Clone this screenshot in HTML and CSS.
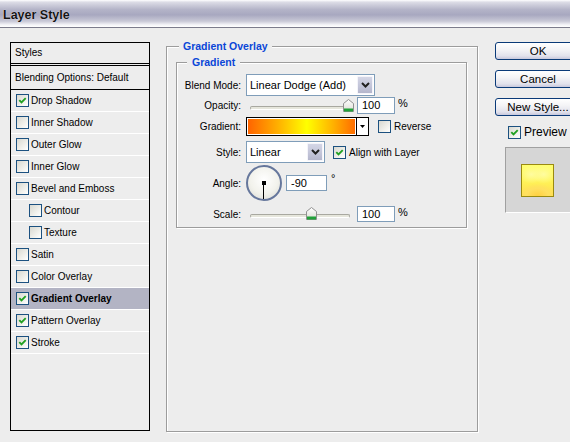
FILE: index.html
```html
<!DOCTYPE html>
<html lang="en">
<head>
    <meta charset="UTF-8">
    <title>Layer Style</title>
    <link rel="stylesheet" href="styles.css">
</head>
<body>
    <div class="titlebar"><span class="title">Layer Style</span></div>
    <div class="main">
        <div class="styles-list">
            <div class="list-head">Styles</div>
            <div class="list-item blending">Blending Options: Default</div>
            <div class="list-item"><span class="check on"></span>Drop Shadow</div>
            <div class="list-item"><span class="check"></span>Inner Shadow</div>
            <div class="list-item"><span class="check"></span>Outer Glow</div>
            <div class="list-item"><span class="check"></span>Inner Glow</div>
            <div class="list-item"><span class="check"></span>Bevel and Emboss</div>
            <div class="list-item sub"><span class="check"></span>Contour</div>
            <div class="list-item sub"><span class="check"></span>Texture</div>
            <div class="list-item"><span class="check"></span>Satin</div>
            <div class="list-item"><span class="check"></span>Color Overlay</div>
            <div class="list-item active"><span class="check on"></span>Gradient Overlay</div>
            <div class="list-item"><span class="check on"></span>Pattern Overlay</div>
            <div class="list-item"><span class="check on"></span>Stroke</div>
        </div>

        <div class="group outer">
            <span class="group-title">Gradient Overlay</span>
            <div class="group inner">
                <span class="group-title inner-title">Gradient</span>

                <div class="field f-blend">
                    <span class="label">Blend Mode:</span>
                    <div class="select blend-select">
                        <span class="select-text">Linear Dodge (Add)</span>
                        <span class="select-btn"></span>
                    </div>
                </div>

                <div class="field f-opacity">
                    <span class="label">Opacity:</span>
                    <div class="slider">
                        <span class="track"></span>
                        <span class="thumb" style="left: 97px"></span>
                    </div>
                    <span class="num">100</span>
                    <span class="unit">%</span>
                </div>

                <div class="field f-gradient">
                    <span class="label">Gradient:</span>
                    <div class="gradient-box"><span class="gradient-fill"></span></div>
                    <span class="grad-arrow"></span>
                    <span class="check opt"></span><span class="opt-text">Reverse</span>
                </div>

                <div class="field f-style">
                    <span class="label">Style:</span>
                    <div class="select style-select">
                        <span class="select-text">Linear</span>
                        <span class="select-btn"></span>
                    </div>
                    <span class="check on opt-style"></span><span class="opt-text">Align with Layer</span>
                </div>

                <div class="field f-angle">
                    <span class="label">Angle:</span>
                    <div class="dial"></div>
                    <span class="num angle-num">-90</span>
                    <span class="degree">°</span>
                </div>

                <div class="field f-scale">
                    <span class="label">Scale:</span>
                    <div class="slider">
                        <span class="track"></span>
                        <span class="thumb" style="left: 60px"></span>
                    </div>
                    <span class="num scale-num">100</span>
                    <span class="unit">%</span>
                </div>
            </div>
        </div>

        <div class="side">
            <div class="btn">OK</div>
            <div class="btn">Cancel</div>
            <div class="btn">New Style...</div>
            <div class="preview-row"><span class="check on"></span>Preview</div>
            <div class="preview-box"><div class="swatch"></div></div>
        </div>
    </div>
</body>
</html>
```

FILE: styles.css
```css
* {
    box-sizing: border-box;
}
body {
    margin: 0;
    width: 570px;
    height: 442px;
    overflow: hidden;
    background-color: #ededed;
    font-family: "Liberation Sans", Arial, sans-serif;
    font-size: 10px;
    color: #000;
}
.titlebar {
    height: 28px;
    padding: 2px 0 0 3px;
    display: flex;
    align-items: center;
    border-bottom: 1px solid #7c7c8c;
    background: linear-gradient(#ffffff 0, #dcdce6 8%, #b4b4c8 35%, #a8a8c0 55%, #c8c8d6 78%, #f4f4f8 92%, #ffffff 100%);
}
.title {
    font-size: 12.5px;
    font-weight: bold;
    color: #141414;
    text-shadow: 0 0 1px #fff;
}
.main {
    display: flex;
    align-items: flex-start;
    padding: 14px 0 0 10px;
}

/* styles list */
.styles-list {
    width: 140px;
    height: 389px;
    border: 1px solid #000;
    flex: none;
}
.list-head {
    height: 23px;
    padding-left: 4px;
    line-height: 20px;
    border-bottom: 3px double #000;
}
.list-item {
    height: 22px;
    padding-left: 5px;
    display: flex;
    align-items: center;
    border-bottom: 1px solid #fff;
}
.list-item.blending {
    height: 24px;
    padding-left: 4px;
    border-bottom-color: #000;
}
.list-item.sub {
    padding-left: 18px;
}
.list-item.active {
    background-color: #b3b4c4;
    font-weight: bold;
}
.check {
    width: 13px;
    height: 13px;
    margin-right: 2px;
    flex: none;
    border: 1px solid #1c5180;
    background: linear-gradient(135deg, #d8d8d0, #f4f4f0 70%, #fff);
}
.check.on {
    background:
        url("data:image/svg+xml,%3Csvg xmlns='http://www.w3.org/2000/svg' width='11' height='11'%3E%3Cpath d='M2.3 5.2 L4.5 7.4 L8.7 3.2' fill='none' stroke='%2321a121' stroke-width='1.9'/%3E%3C/svg%3E") no-repeat center,
        linear-gradient(135deg, #d8d8d0, #f4f4f0 70%, #fff);
}

/* group boxes */
.group {
    position: relative;
    border: 1px solid #9c9c9c;
    box-shadow: inset 1px 1px 0 #fff, 1px 1px 0 #fff;
}
.outer {
    margin: 4px 0 0 16px;
    width: 312px;
    height: 386px;
    padding: 15px 0 0 9px;
    flex: none;
}
.inner {
    width: 291px;
    height: 166px;
    padding-top: 11px;
}
.group-title {
    position: absolute;
    top: -7px;
    left: 12px;
    padding: 0 4px;
    background-color: #ededed;
    color: #0a46d8;
    font-size: 10.5px;
    font-weight: bold;
    line-height: 13px;
}
.inner-title {
    left: 10px;
    padding: 0 5px;
}

/* fields */
.field {
    display: flex;
    align-items: center;
}
.label {
    width: 64px;
    margin-right: 5px;
    text-align: right;
    flex: none;
}
.f-blend { height: 22px; }
.f-opacity { height: 17px; margin-top: 1px; }
.f-gradient { height: 19px; margin-top: 3px; }
.f-style { height: 22px; margin-top: 5px; }
.f-angle { height: 36px; margin-top: 2px; }
.f-scale { height: 16px; margin-top: 5px; }

.select {
    height: 22px;
    padding: 1px;
    display: flex;
    align-items: center;
    border: 1px solid #7f9db9;
    background-color: #fff;
    font-size: 11px;
}
.blend-select { width: 129px; }
.style-select { width: 79px; }
.select-text {
    padding-left: 2px;
}
.select-btn {
    width: 16px;
    height: 18px;
    margin-left: auto;
    border: 1px solid #f4f4fa;
    border-radius: 1px;
    background:
        url("data:image/svg+xml,%3Csvg xmlns='http://www.w3.org/2000/svg' width='9' height='6'%3E%3Cpath d='M1 1 L4.5 4.5 L8 1' fill='none' stroke='%23202020' stroke-width='2'/%3E%3C/svg%3E") no-repeat center,
        linear-gradient(#d4d6e6, #c2c4d8 60%, #b4b6cc);
}
.slider {
    position: relative;
    width: 111px;
    height: 100%;
    flex: none;
}
.track {
    position: absolute;
    left: 4px;
    right: 4px;
    top: 9px;
    height: 4px;
    border: 1px solid #a8a8a0;
    border-bottom-color: #fff;
    border-radius: 2px;
    background-color: #e6e6dc;
}
.f-scale .track {
    top: 8px;
    right: 7px;
}
.thumb {
    position: absolute;
    top: 2px;
    width: 11px;
    height: 13px;
    background: url("data:image/svg+xml,%3Csvg xmlns='http://www.w3.org/2000/svg' width='11' height='13'%3E%3Cdefs%3E%3ClinearGradient id='g' x1='0' y1='0' x2='0' y2='1'%3E%3Cstop offset='0' stop-color='%23fff'/%3E%3Cstop offset='1' stop-color='%23dcdcd4'/%3E%3C/linearGradient%3E%3C/defs%3E%3Cpath d='M0.5 4.5 L5.5 0.5 L10.5 4.5 L10.5 12.5 L0.5 12.5 Z' fill='url(%23g)' stroke='%23909090'/%3E%3Crect x='1' y='9.5' width='9' height='3' fill='%2321a139'/%3E%3C/svg%3E") no-repeat;
}
.f-scale .thumb {
    top: 1px;
}
.num {
    width: 38px;
    height: 17px;
    padding-left: 4px;
    line-height: 15px;
    border: 1px solid #7f9db9;
    background-color: #fff;
    font-size: 11px;
    flex: none;
}
.scale-num {
    height: 16px;
    line-height: 14px;
}
.unit {
    margin-left: 3px;
    font-size: 11px;
    align-self: flex-start;
}
.gradient-box {
    width: 111px;
    height: 19px;
    padding: 1px;
    border: 1px solid #000;
    background-color: #fff;
    flex: none;
}
.gradient-fill {
    display: block;
    height: 100%;
    background: linear-gradient(90deg, #ff6400 0, #ffb000 28%, #ffff00 55%, #ffb000 80%, #ff6c00 100%);
}
.grad-arrow {
    width: 13px;
    height: 19px;
    margin-left: -1px;
    border: 1px solid #000;
    flex: none;
    background: #fff url("data:image/svg+xml,%3Csvg xmlns='http://www.w3.org/2000/svg' width='5' height='3'%3E%3Cpath d='M0 0 H5 L2.5 3 Z' fill='%23000'/%3E%3C/svg%3E") no-repeat center;
}
.check.opt {
    margin-left: 9px;
}
.check.opt-style {
    margin-left: 8px;
}
.opt-text {
    margin-left: 1px;
}
.dial {
    position: relative;
    width: 36px;
    height: 36px;
    flex: none;
    border: 2px solid #66779c;
    border-radius: 50%;
    background: radial-gradient(circle at 50% 40%, #ffffff 0, #f2f2ec 55%, #d8d8d2 100%);
}
.dial::before {
    content: "";
    position: absolute;
    left: 14px;
    top: 14px;
    width: 4px;
    height: 4px;
    background-color: #000;
}
.dial::after {
    content: "";
    position: absolute;
    left: 15px;
    top: 16px;
    width: 1px;
    height: 16px;
    background-color: #000;
}
.angle-num {
    width: 41px;
    height: 16px;
    margin-left: 4px;
    line-height: 14px;
}
.degree {
    margin-left: 4px;
    font-size: 11px;
    align-self: flex-start;
    margin-top: 7px;
}

/* buttons and preview */
.side {
    margin-left: 17px;
    flex: none;
}
.btn {
    width: 86px;
    height: 18px;
    margin-bottom: 10px;
    border: 1px solid #0a3a78;
    border-radius: 3px;
    background: linear-gradient(#ffffff, #f4f4f6 40%, #e2e2ec 80%, #c8c8dc);
    font-size: 11.5px;
    line-height: 16px;
    text-align: center;
}
.preview-row {
    height: 12px;
    margin-top: 8px;
    padding-left: 13px;
    display: flex;
    align-items: center;
    font-size: 12px;
}
.preview-row .check {
    margin-right: 3px;
}
.preview-box {
    width: 66px;
    height: 66px;
    margin: 9px 0 0 10px;
    padding: 16px 0 0 15px;
    border: 1px solid #a0a0a0;
    border-right-color: #fff;
    border-bottom-color: #fff;
    background-color: #d6d6d6;
}
.swatch {
    width: 33px;
    height: 33px;
    border: 1px solid #9a8a10;
    background:
        radial-gradient(ellipse 60% 40% at 50% 100%, #ffd040 0, #ffe060 60%, transparent 100%),
        radial-gradient(ellipse 40% 30% at 30% 30%, #fffca0 0, transparent 100%),
        radial-gradient(ellipse 40% 30% at 70% 30%, #fffca0 0, transparent 100%),
        linear-gradient(#ffff70, #fff458 50%, #ffdc50);
}
```
